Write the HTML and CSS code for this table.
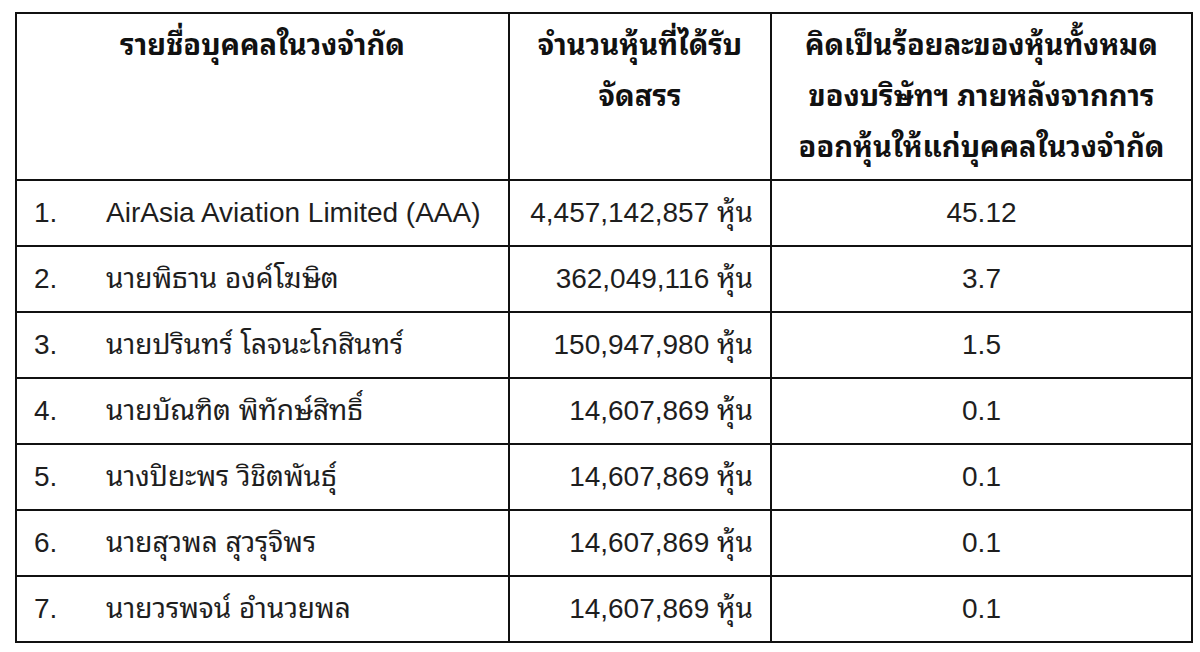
FILE: index.html
```html
<!DOCTYPE html>
<html lang="th">
<head>
<meta charset="utf-8">
<title>รายชื่อบุคคลในวงจำกัด</title>
<link rel="stylesheet" href="styles.css">
</head>
<body>
<div class="page">
<table class="alloc">
  <colgroup>
    <col class="c-name">
    <col class="c-shares">
    <col class="c-pct">
  </colgroup>
  <thead>
    <tr>
      <th>รายชื่อบุคคลในวงจำกัด</th>
      <th>จำนวนหุ้นที่ได้รับ<br>จัดสรร</th>
      <th>คิดเป็นร้อยละของหุ้นทั้งหมด<br>ของบริษัทฯ ภายหลังจากการ<br>ออกหุ้นให้แก่บุคคลในวงจำกัด</th>
    </tr>
  </thead>
  <tbody>
    <tr>
      <td class="name"><span class="no">1.</span>AirAsia Aviation Limited (AAA)</td>
      <td class="shares">4,457,142,857 หุ้น</td>
      <td class="pct">45.12</td>
    </tr>
    <tr>
      <td class="name"><span class="no">2.</span>นายพิธาน องค์โฆษิต</td>
      <td class="shares">362,049,116 หุ้น</td>
      <td class="pct">3.7</td>
    </tr>
    <tr>
      <td class="name"><span class="no">3.</span>นายปรินทร์ โลจนะโกสินทร์</td>
      <td class="shares">150,947,980 หุ้น</td>
      <td class="pct">1.5</td>
    </tr>
    <tr>
      <td class="name"><span class="no">4.</span>นายบัณฑิต พิทักษ์สิทธิ์</td>
      <td class="shares">14,607,869 หุ้น</td>
      <td class="pct">0.1</td>
    </tr>
    <tr>
      <td class="name"><span class="no">5.</span>นางปิยะพร วิชิตพันธุ์</td>
      <td class="shares">14,607,869 หุ้น</td>
      <td class="pct">0.1</td>
    </tr>
    <tr>
      <td class="name"><span class="no">6.</span>นายสุวพล สุวรุจิพร</td>
      <td class="shares">14,607,869 หุ้น</td>
      <td class="pct">0.1</td>
    </tr>
    <tr>
      <td class="name"><span class="no">7.</span>นายวรพจน์ อำนวยพล</td>
      <td class="shares">14,607,869 หุ้น</td>
      <td class="pct">0.1</td>
    </tr>
  </tbody>
</table>
</div>
</body>
</html>
```

FILE: styles.css
```css
html, body {
  margin: 0;
  padding: 0;
  background: #ffffff;
}

.page {
  padding: 12px 0 0 15px;
}

.alloc {
  border-collapse: collapse;
  table-layout: fixed;
  width: 1176px;
  font-family: "Liberation Sans", Arial, "Noto Sans Thai Looped", "Loma", "Garuda", "Tlwg Typo", "Waree", "Noto Sans Thai", sans-serif;
  font-size: 28px;
  color: #1e1e1e;
}

.c-name { width: 493px; }
.c-shares { width: 262px; }
.c-pct { width: 421px; }

.alloc th,
.alloc td {
  border: 2px solid #111;
  padding: 0;
}

.alloc th {
  height: 159px;
  vertical-align: top;
  font-weight: bold;
  font-size: 29px;
  line-height: 51px;
  padding-top: 6px;
  text-align: center;
  color: #111;
}

.alloc td {
  height: 64px;
  vertical-align: middle;
  line-height: 32px;
}

.alloc td.name {
  padding-left: 17px;
  white-space: nowrap;
}

.no {
  display: inline-block;
  width: 72px;
}

.alloc td.shares {
  text-align: right;
  padding-right: 17px;
  white-space: nowrap;
}

.alloc td.pct {
  text-align: center;
}
```
